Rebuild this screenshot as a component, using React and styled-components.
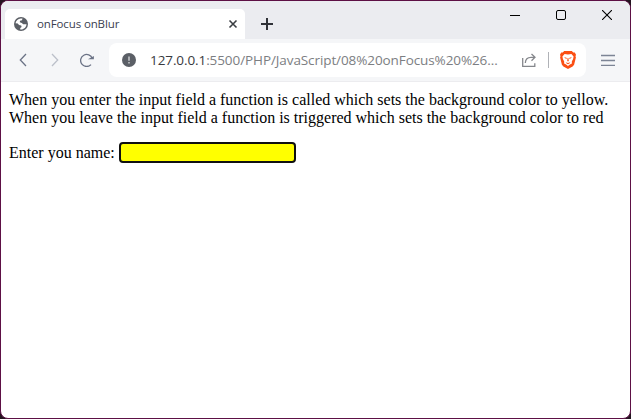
import React from "react";
import styled, { createGlobalStyle } from "styled-components";

const GlobalStyle = createGlobalStyle`
  *, *::before, *::after { box-sizing: border-box; }
  html, body { margin: 0; padding: 0; overflow: hidden; background: #241420; }
`;

const Window = styled.div`
  width: 631px;
  height: 419px;
  display: flex;
  flex-direction: column;
  border: 1px solid #5d1045;
  border-radius: 8px;
  background: #fff;
  overflow: hidden;
`;

const TitleBar = styled.header`
  flex: 0 0 38px;
  display: flex;
  align-items: flex-start;
  padding-left: 4px;
  background: #ebecf0;
`;

const Tab = styled.div`
  width: 240px;
  height: 30px;
  margin-top: 8px;
  padding: 0 7px 0 9px;
  display: flex;
  align-items: center;
  border-radius: 5px 5px 0 0;
  background: #fff;
`;

const TabTitle = styled.span`
  flex: 1;
  margin-left: 9px;
  font: 11.5px/16px "Open Sans", "Noto Sans", sans-serif;
  letter-spacing: ${(p) => p.$tracking};
  color: #3b3e4f;
  white-space: nowrap;
`;

const Glyph = styled.svg`
  display: block;
  flex: none;
  width: ${(p) => p.$w}px;
  height: ${(p) => p.$h || p.$w}px;
  fill: none;
  stroke: ${(p) => p.$color || "#6b7386"};
  stroke-width: ${(p) => p.$stroke || 1.3};
`;

const IconButton = styled.button`
  flex: none;
  width: ${(p) => p.$w}px;
  height: ${(p) => p.$h || 34}px;
  padding: 0;
  border: 0;
  display: flex;
  align-items: center;
  justify-content: center;
  background: transparent;
`;

const NewTab = styled(IconButton)`
  margin: 8px 0 0 7px;
`;

const WindowControls = styled.div`
  display: flex;
  margin-left: auto;
`;

const Toolbar = styled.nav`
  flex: 0 0 43px;
  display: flex;
  align-items: center;
  padding-left: 6px;
  background: #f5f6f8;
  border-bottom: 1px solid #ececef;
`;

const AddressBar = styled.div`
  flex: none;
  width: 477px;
  height: 34px;
  margin-left: 6px;
  padding: 0 10px 0 13px;
  display: flex;
  align-items: center;
  border-radius: 8px;
  background: #fff;
`;

const Url = styled.span`
  flex: 1;
  margin-left: 14px;
  font: 13.5px/20px "Open Sans", "Noto Sans", sans-serif;
  letter-spacing: ${(p) => p.$tracking};
  color: #7c7e82;
  white-space: nowrap;
`;

const Host = styled.span`
  color: #383a40;
`;

const Divider = styled.span`
  width: 1px;
  height: 16px;
  margin: 0 11px 0 12px;
  background: #b0b2b7;
`;

const Page = styled.main`
  flex: 1;
  padding: 9px 8px;
  font: 16px/18px "Liberation Serif", serif;
  color: #000;
`;

const Line = styled.div`
  white-space: nowrap;
`;

const Field = styled.label`
  display: flex;
  align-items: center;
  margin-top: 15px;
  height: 22px;
`;

const NameInput = styled.input`
  width: 177px;
  height: 21px;
  margin: 0 0 1px 4px;
  padding: 1px 4px;
  border: 2px solid #101010;
  border-radius: 4px;
  outline: none;
  background: #ff0;
`;

const GlobeIcon = () => (
  <Glyph $w={14} viewBox="0 0 14 14" $color="none">
    <circle cx="7" cy="7" r="7" fill="#5b5f66" />
    <path fill="#fff" d="M1.500 6.200C1.900 3.500 4 1.600 6.800 1.400L8.500 1.600 8 3.200 6 3.700 5.800 5.300 7.800 6 9.200 7.300 12.500 7.300C12.300 10.200 10 12.500 7 12.600L6.200 12.500 6.300 10.900 7.600 10 7.200 8.600 5 8.100 3.800 6.600z" />
  </Glyph>
);

const ShieldLion = () => (
  <Glyph $w={16} $h={18} viewBox="0 0 16 18" $color="none">
    <path fill="#fb4f14" d="M4.200 0h7.600l1.500 1.600 1.500-.1L16 3.700l-.5 1.500.4 1.300-1.800 7.200-1.500 1.900L8 18l-4.600-2.400-1.500-1.900L.1 6.500l.4-1.300L0 3.700l1.200-2.200 1.500.1z" />
    <path fill="#fff" d="M4.600 3l3.400.5L11.400 3l2.200 2.500-.5 2.500-1.300 2.400.1 2-2 1.200L8 15l-1.900-1.400-2-1.200.1-2L2.900 8l-.5-2.500z" />
    <path fill="#fb4f14" d="M4 6l3 .9-.9 1.200zM12 6l-3 .9.900 1.200zM7.600 7h.8l.4 2.900-.8.600-.8-.6zM5.700 11.300l2.300.7 2.300-.7-.9 1.300L8 13.300l-1.400-.7z" />
  </Glyph>
);

export default function App() {
  return (
    <>
      <GlobalStyle />
      <Window>
        <TitleBar>
          <Tab>
            <GlobeIcon />
            <TabTitle $tracking="-0.12px">onFocus onBlur</TabTitle>
            <Glyph $w={10} viewBox="0 0 10 10" $color="#3b3e43" $stroke={1.6}>
              <path d="M1.500 1.500l7 7M8.500 1.500l-7 7" />
            </Glyph>
          </Tab>
          <NewTab $w={30} $h={30} aria-label="New tab">
            <Glyph $w={12} viewBox="0 0 12 12" $color="#303238" $stroke={2}>
              <path d="M6 0v12M0 6h12" />
            </Glyph>
          </NewTab>
          <WindowControls>
            <IconButton $w={46} $h={28} aria-label="Minimize">
              <Glyph $w={10} viewBox="0 0 10 10" $color="#000" $stroke={1}>
                <path d="M0 5.500h10" />
              </Glyph>
            </IconButton>
            <IconButton $w={46} $h={28} aria-label="Maximize">
              <Glyph $w={10} viewBox="0 0 10 10" $color="#000" $stroke={1}>
                <rect x=".5" y=".5" width="9" height="9" rx="1.500" />
              </Glyph>
            </IconButton>
            <IconButton $w={46} $h={28} aria-label="Close">
              <Glyph $w={10} viewBox="0 0 10 10" $color="#000" $stroke={1.1}>
                <path d="M0 0l10 10M10 0L0 10" />
              </Glyph>
            </IconButton>
          </WindowControls>
        </TitleBar>
        <Toolbar>
          <IconButton $w={32} aria-label="Back">
            <Glyph $w={8} $h={14} viewBox="0 0 8 14">
              <path d="M7 1L1.300 7 7 13" />
            </Glyph>
          </IconButton>
          <IconButton $w={32} aria-label="Forward">
            <Glyph $w={8} $h={14} viewBox="0 0 8 14" $color="#bcc0ca">
              <path d="M1 1l5.700 6L1 13" />
            </Glyph>
          </IconButton>
          <IconButton $w={32} aria-label="Reload">
            <Glyph $w={14} viewBox="0 0 14 14">
              <path d="M11 11.600A6 6 0 1 1 12.300 5.500" />
              <path d="M10.400 5.600h2.800V4z" fill="#6b7386" />
            </Glyph>
          </IconButton>
          <AddressBar>
            <Glyph $w={14} viewBox="0 0 14 14" $color="none">
              <circle cx="7" cy="7" r="7" fill="#5b5f66" />
              <path d="M6.200 3.500h1.600v4.200H6.200zM6.200 9h1.600v1.600H6.200z" fill="#c4c6c9" />
            </Glyph>
            <Url $tracking="-0.09px">
              <Host>127.0.0.1</Host>:5500/PHP/JavaScript/08%20onFocus%20%26...
            </Url>
            <Glyph $w={14} viewBox="0 0 14 14" $color="#85878c">
              <path d="M.7 5v8.300h12.100v-3M3.300 10C3.500 6.500 5.300 4.300 9 4.300h4M9.500 1l3.500 3.300-3.500 3.400" />
            </Glyph>
            <Divider />
            <ShieldLion />
          </AddressBar>
          <IconButton $w={44} aria-label="Menu">
            <Glyph $w={14} $h={12} viewBox="0 0 14 12" $color="#7c8495">
              <path d="M0 1.500h14M0 6.500h14M0 11.300h14" />
            </Glyph>
          </IconButton>
        </Toolbar>
        <Page>
          <Line>When you enter the input field a function is called which sets the background color to yellow.</Line>
          <Line>When you leave the input field a function is triggered which sets the background color to red</Line>
          <Field>
            Enter you name:
            <NameInput type="text" aria-label="Name" />
          </Field>
        </Page>
      </Window>
    </>
  );
}
